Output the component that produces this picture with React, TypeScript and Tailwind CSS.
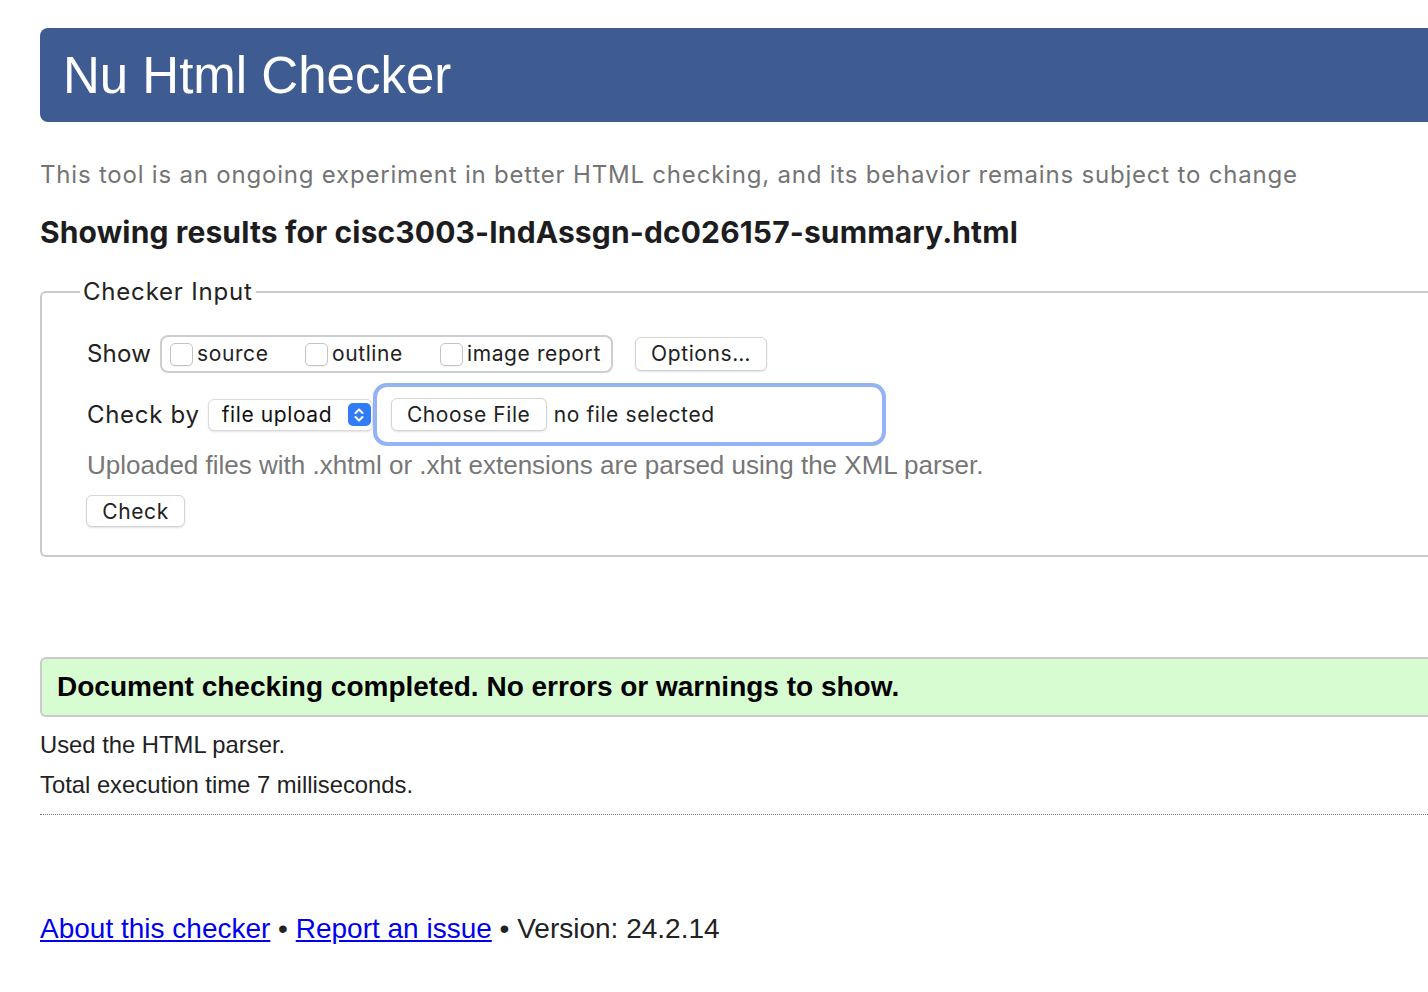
import React from "react";

const sys = { fontFamily: "Inter, 'Noto Sans', sans-serif" } as React.CSSProperties;

function Checkbox() {
  return (
    <span className="inline-block w-[23px] h-[23px] rounded-[5px] border border-[#c4c4c4] bg-white shadow-[0_1px_1px_rgba(0,0,0,0.06)]" />
  );
}

export default function App() {
  return (
    <div className="w-[1428px] h-[992px] overflow-hidden bg-white text-[#222]" style={{ fontFamily: "'Liberation Sans', Arial, sans-serif" }}>
      <div className="ml-[40px] w-[1420px]">
        <header className="mt-[28px] h-[94px] rounded-l-[8px] bg-[#3e5c91] flex items-center pl-[23px]">
          <h1 className="text-white text-[51px] leading-none font-normal">Nu Html Checker</h1>
        </header>

        <p className="mt-[37px] text-[24px] leading-[32px] tracking-[0.8px] text-[#747474] whitespace-nowrap" style={sys}>
          This tool is an ongoing experiment in better HTML checking, and its behavior remains subject to change
        </p>

        <h2 className="mt-[23px] text-[30px] leading-[36px] tracking-[0.14px] font-bold text-[#1d1d1f] whitespace-nowrap" style={sys}>
          Showing results for cisc3003-IndAssgn-dc026157-summary.html
        </h2>

        <fieldset className="mt-[27px] border-2 border-[#cbcbcb] rounded-l-[6px] border-r-0 pl-[38px] pb-[28px]">
          <legend className="px-[3px] text-[24px] leading-[30px] tracking-[0.8px] text-[#222]" style={sys}>Checker Input</legend>

          <div className="pl-[7px] pt-[28px]" style={sys}>
            <div className="flex items-center h-[38px]">
              <span className="text-[24px] tracking-[0.2px] text-[#222]">Show</span>
              <div className="ml-[9px] h-[38px] w-[453px] rounded-[8px] border-2 border-[#cdcdcd] flex items-center pl-[8px] text-[21px] tracking-[0.6px] text-[#222]">
                <Checkbox />
                <span className="ml-[4px] w-[108px]">source</span>
                <Checkbox />
                <span className="ml-[4px] w-[108px]">outline</span>
                <Checkbox />
                <span className="ml-[4px]">image report</span>
              </div>
              <button className="ml-[22px] h-[34px] w-[132px] rounded-[6px] border border-[#d4d4d4] bg-white shadow-[0_1px_2px_rgba(0,0,0,0.12)] text-[21px] tracking-[0.6px] text-[#222]">
                Options…
              </button>
            </div>

            <div className="mt-[10px] flex items-center h-[63px]">
              <span className="text-[24px] tracking-[0.7px] text-[#222]">Check by</span>
              <div className="ml-[8px] h-[32px] w-[165px] rounded-[6px] border border-[#dcdcdc] bg-white shadow-[0_1px_2px_rgba(0,0,0,0.12)] flex items-center justify-between pl-[13px] pr-[1px]">
                <span className="text-[21px] tracking-[0.6px] text-[#111]">file upload</span>
                <span className="w-[23px] h-[23px] rounded-[5px] bg-[#2f7cf6] flex items-center justify-center">
                  <svg width="12" height="16" viewBox="0 0 12 16" fill="none" stroke="white" strokeWidth="2" strokeLinecap="round" strokeLinejoin="round">
                    <path d="M2.5 6 L6 2.5 L9.5 6" />
                    <path d="M2.5 10 L6 13.5 L9.5 10" />
                  </svg>
                </span>
              </div>
              <div className="h-[63px] w-[513px] rounded-[14px] border-[4px] border-[#93b3f2] flex items-center pl-[14px]">
                <button className="h-[33px] w-[156px] rounded-[6px] border border-[#d4d4d4] bg-white shadow-[0_1px_2px_rgba(0,0,0,0.12)] text-[21px] tracking-[0.6px] text-[#222]">
                  Choose File
                </button>
                <span className="ml-[7px] text-[21px] tracking-[0.6px] text-[#222]">no file selected</span>
              </div>
            </div>

            <p className="mt-[5px] text-[26px] leading-[28px] text-[#777] whitespace-nowrap" style={{ fontFamily: "'Liberation Sans', Arial, sans-serif" }}>
              Uploaded files with .xhtml or .xht extensions are parsed using the XML parser.
            </p>

            <button className="mt-[16px] -ml-[1px] h-[32px] w-[99px] rounded-[6px] border border-[#d4d4d4] bg-white shadow-[0_1px_2px_rgba(0,0,0,0.12)] text-[21px] tracking-[0.6px] text-[#222]">
              Check
            </button>
          </div>
        </fieldset>

        <div className="mt-[100px] h-[60px] rounded-l-[6px] border-2 border-r-0 border-[#cbcbcb] bg-[#d8fcd2] flex items-center pl-[15px]">
          <p className="text-[28px] font-bold text-black whitespace-nowrap">
            Document checking completed. No errors or warnings to show.
          </p>
        </div>

        <p className="mt-[14px] text-[23.8px] leading-[28px] text-[#222]">Used the HTML parser.</p>
        <p className="mt-[12px] text-[23.8px] leading-[28px] text-[#222]">Total execution time 7 milliseconds.</p>

        <div className="mt-[15px] border-t border-dotted border-[#777]" />

        <p className="mt-[96px] text-[28px] leading-[36px] text-[#222] whitespace-nowrap">
          <a href="#" className="text-[#0000ee] underline">About this checker</a>
          {" • "}
          <a href="#" className="text-[#0000ee] underline">Report an issue</a>
          {" • Version: 24.2.14"}
        </p>
      </div>
    </div>
  );
}
